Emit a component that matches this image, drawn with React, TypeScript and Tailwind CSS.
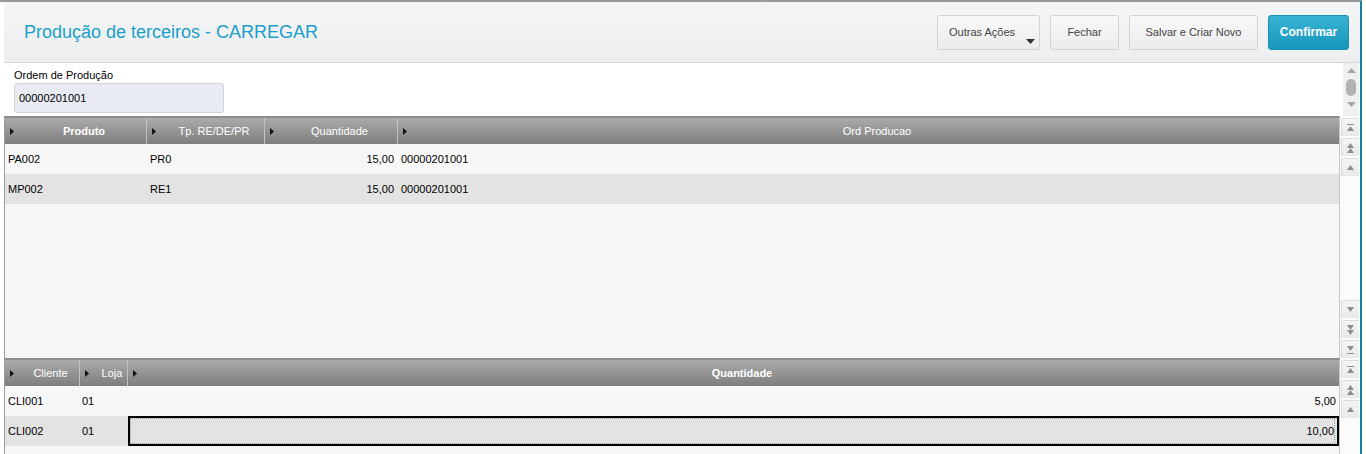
import React from "react";

const F = "font-['Liberation_Sans',Arial,sans-serif]";

const Arrow = () => (
  <svg width="4" height="7" viewBox="0 0 4 7" className="shrink-0">
    <path d="M0 0L4 3.5L0 7Z" fill="#111" />
  </svg>
);

type Col = { label: string; w?: string; bold?: boolean };

function HeaderRow({ cols }: { cols: Col[] }) {
  return (
    <div className="flex h-[26px] bg-gradient-to-b from-[#ababab] to-[#7e7e7e] text-white text-[11px]">
      {cols.map((c, i) => (
        <div
          key={i}
          className={`flex items-center pl-[5px] ${c.w ? c.w + " border-r border-[#c2c2c2]" : "flex-1"}`}
        >
          <Arrow />
          <span className={`flex-1 text-center pl-[8px] ${c.bold ? "font-bold" : ""}`}>{c.label}</span>
        </div>
      ))}
    </div>
  );
}

const TriUp = ({ y = 0 }: { y?: number }) => <path d={`M1 ${y + 5}L4.5 ${y}L8 ${y + 5}Z`} fill="#8e8e8e" />;
const TriDown = ({ y = 0 }: { y?: number }) => <path d={`M1 ${y}L4.5 ${y + 5}L8 ${y}Z`} fill="#8e8e8e" />;

function SBtn({ kind }: { kind: string }) {
  let inner: React.ReactNode = null;
  if (kind === "top")
    inner = (
      <>
        <rect x="1" y="1" width="7" height="1" fill="#8e8e8e" />
        <TriUp y={3} />
      </>
    );
  if (kind === "dup")
    inner = (
      <>
        <TriUp y={0} />
        <TriUp y={5} />
      </>
    );
  if (kind === "up") inner = <TriUp y={2} />;
  if (kind === "down") inner = <TriDown y={2} />;
  if (kind === "ddown")
    inner = (
      <>
        <TriDown y={0} />
        <TriDown y={5} />
      </>
    );
  if (kind === "bottom")
    inner = (
      <>
        <TriDown y={1} />
        <rect x="1" y="8" width="7" height="1" fill="#8e8e8e" />
      </>
    );
  return (
    <div className="h-[18px] w-[18px] flex items-center justify-center bg-gradient-to-b from-[#f5f5f5] to-[#e9e9e9] border-l border-t border-[#dcdcdc] rounded-tl-[2px]">
      <svg width="9" height="10" viewBox="0 0 9 10">
        {inner}
      </svg>
    </div>
  );
}

function ScrollCol({ top, bottom }: { top: string[]; bottom?: string[] }) {
  return (
    <div className="w-[20px] flex flex-col justify-between bg-[#fbfbfb] pl-[1px] pt-[2px] pb-0">
      <div className="flex flex-col gap-[2px]">
        {top.map((k, i) => (
          <SBtn key={i} kind={k} />
        ))}
      </div>
      {bottom && (
        <div className="flex flex-col gap-[2px]">
          {bottom.map((k, i) => (
            <SBtn key={i} kind={k} />
          ))}
        </div>
      )}
    </div>
  );
}

export default function App() {
  return (
    <div className={`${F} w-[1366px] h-[454px] bg-white overflow-hidden flex`}>
      <div className="w-[4px] border-t-2 border-[#9a9a9a]" />
      <div className="w-[1358px] border-r-2 border-[#17809c] flex flex-col border-t-2 border-t-[#9a9a9a]">
        {/* Header */}
        <div className="h-[61px] shrink-0 bg-gradient-to-b from-[#f4f5f6] to-[#eceef0] border-b border-[#d8d8d8] flex items-center pl-[20px] pr-[11px]">
          <div className="text-[18px] leading-[21px] text-[#1c9fc9] flex-1">Produção de terceiros - CARREGAR</div>
          <div className="flex items-center gap-[10px] text-[11px] text-[#444]">
            <div className="relative h-[35px] w-[103px] rounded-[3px] border border-[#d3d3d3] bg-gradient-to-b from-[#f8f8f8] to-[#ececec] flex items-center pl-[11px]">
              Outras Ações
              <svg width="9" height="5" viewBox="0 0 9 5" className="absolute right-[4px] bottom-[5px]">
                <path d="M0 0H9L4.5 5Z" fill="#333" />
              </svg>
            </div>
            <div className="h-[35px] w-[69px] rounded-[3px] border border-[#d3d3d3] bg-gradient-to-b from-[#f8f8f8] to-[#ececec] flex items-center justify-center">
              Fechar
            </div>
            <div className="h-[35px] w-[129px] rounded-[3px] border border-[#d3d3d3] bg-gradient-to-b from-[#f8f8f8] to-[#ececec] flex items-center justify-center">
              Salvar e Criar Novo
            </div>
            <div className="h-[35px] w-[81px] rounded-[3px] border border-[#1a90b4] bg-gradient-to-b from-[#38b3d4] to-[#1396bb] text-white font-bold text-[12px] flex items-center justify-center">
              Confirmar
            </div>
          </div>
        </div>

        {/* Form */}
        <div className="h-[53px] shrink-0 flex">
          <div className="flex-1 pl-[10px] pt-[6px]">
            <div className="text-[11px] leading-[13px] text-black">Ordem de Produção</div>
            <div className="mt-[1px] h-[30px] w-[210px] rounded-[3px] border border-[#cfd3da] bg-[#e8ebf2] flex items-center pl-[4px] text-[11px] text-black">
              00000201001
            </div>
          </div>
          <div className="w-[16px] mr-[1px] bg-[#f0f0f0] flex flex-col items-center pt-[5px]">
            <svg width="9" height="6" viewBox="0 0 9 6">
              <path d="M0 5L4.5 0L9 5Z" fill="#a5a5a5" />
            </svg>
            <div className="mt-[5px] h-[17px] w-[10px] rounded-[5px] bg-[#b2b2b2]" />
            <svg width="9" height="6" viewBox="0 0 9 6" className="mt-[6px]">
              <path d="M0 0L4.5 5L9 0Z" fill="#a5a5a5" />
            </svg>
          </div>
        </div>

        {/* Grid 1 */}
        <div className="h-[242px] shrink-0 flex">
          <div className="w-[1336px] border-l border-l-[#9c9c9c] border-r border-r-[#c6c6c6] border-t-2 border-t-[#8d8d8d] bg-[#f7f7f7] flex flex-col">
            <HeaderRow
              cols={[
                { label: "Produto", w: "w-[142px]", bold: true },
                { label: "Tp. RE/DE/PR", w: "w-[118px]" },
                { label: "Quantidade", w: "w-[133px]" },
                { label: "Ord Producao" },
              ]}
            />
            {[
              ["PA002", "PR0", "15,00", "00000201001", "bg-[#f7f7f7]"],
              ["MP002", "RE1", "15,00", "00000201001", "bg-[#e3e3e3]"],
            ].map((r, i) => (
              <div key={i} className={`h-[30px] flex items-center text-[11px] text-black ${r[4]}`}>
                <div className="w-[142px] pl-[3px]">{r[0]}</div>
                <div className="w-[118px] pl-[3px]">{r[1]}</div>
                <div className="w-[133px] pr-[4px] text-right">{r[2]}</div>
                <div className="flex-1 pl-[3px]">{r[3]}</div>
              </div>
            ))}
          </div>
          <ScrollCol top={["top", "dup", "up"]} bottom={["down", "ddown", "bottom"]} />
        </div>

        {/* Grid 2 */}
        <div className="flex-1 flex">
          <div className="w-[1336px] border-l border-l-[#9c9c9c] border-r border-r-[#c6c6c6] border-t-2 border-t-[#8d8d8d] bg-[#f7f7f7] flex flex-col">
            <HeaderRow
              cols={[
                { label: "Cliente", w: "w-[75px]" },
                { label: "Loja", w: "w-[48px]" },
                { label: "Quantidade", bold: true },
              ]}
            />
            <div className="h-[30px] flex items-center text-[11px] text-black bg-[#f7f7f7]">
              <div className="w-[75px] pl-[3px]">CLI001</div>
              <div className="w-[48px] pl-[2px]">01</div>
              <div className="flex-1 text-right pr-[3px]">5,00</div>
            </div>
            <div className="h-[30px] flex items-center text-[11px] text-black bg-[#e3e3e3]">
              <div className="w-[75px] pl-[3px]">CLI002</div>
              <div className="w-[48px] pl-[2px]">01</div>
              <div className="flex-1 h-full border-2 border-black flex items-center justify-end pr-[2px]">
                <div className="h-full w-full outline outline-1 outline-dotted outline-[#9a9a9a] -outline-offset-1 flex items-center justify-end pr-[1px]">
                  10,00
                </div>
              </div>
            </div>
          </div>
          <ScrollCol top={["top", "dup", "up"]} />
        </div>
      </div>
    </div>
  );
}
